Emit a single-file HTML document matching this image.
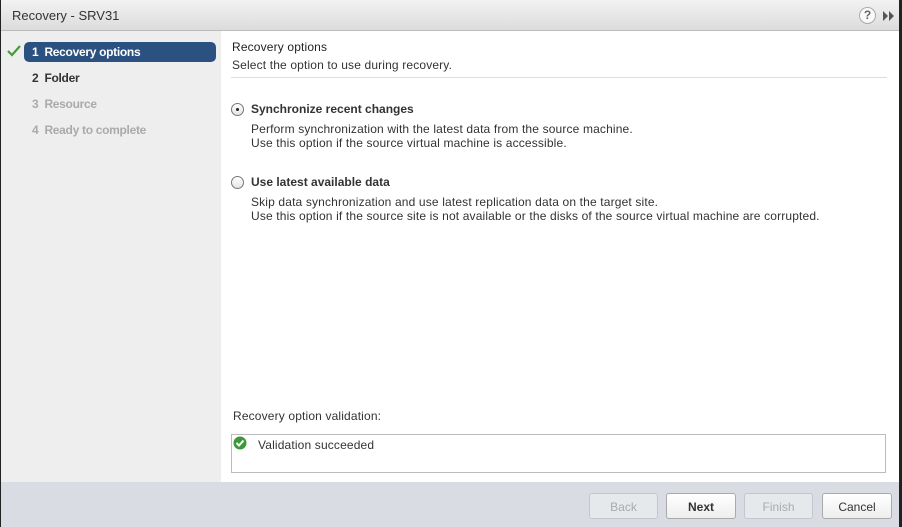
<!DOCTYPE html>
<html><head><meta charset="utf-8"><style>
*{margin:0;padding:0;box-sizing:border-box}
body{width:902px;height:527px;overflow:hidden;font-family:"Liberation Sans",Arial,sans-serif;font-size:12px;color:#333;background:#fff;position:relative;letter-spacing:0.15px}
.frame{position:absolute;left:0;top:0;width:902px;height:527px;border-left:1px solid #222;border-right:3px solid #222;}
.title{position:absolute;left:1px;top:0;width:898px;height:31px;background:linear-gradient(#f2f2f2,#dcdcdc);border-bottom:1px solid #bbb;font-size:13px;color:#333;padding:8px 0 0 11px;letter-spacing:0}
.left{position:absolute;left:1px;top:31px;width:220px;height:451px;background:#eee}
.right{position:absolute;left:221px;top:31px;width:678px;height:451px;background:#fff}
.footer{position:absolute;left:1px;top:482px;width:898px;height:45px;background:#d9dde3}
.step{position:absolute;left:24px;width:192px;height:20px;font-weight:bold;font-size:12px;padding:3px 0 0 8px;letter-spacing:-0.3px}
.sel{background:#2b5180;color:#fff;border-radius:5px}
.dim{color:#aaa}
.btn{position:absolute;top:493px;height:26px;border:1px solid #aaa;border-radius:3px;background:linear-gradient(#fff,#eee);text-align:center;font-size:12px;padding-top:6px;color:#333;letter-spacing:0}
.btn.dis{color:#aaa;border-color:#c4c8cc;background:#e6e9ec}
.radio{position:absolute;width:13px;height:13px;border:1px solid #777;border-radius:50%;background:linear-gradient(#fff,#e4e4e4)}
.t{position:absolute;white-space:nowrap}
</style></head><body>
<div class="frame"></div>
<div class="title">Recovery - SRV31</div>
<div style="position:absolute;left:859px;top:7px;width:17px;height:17px;border-radius:50%;border:1px solid #aaa;background:#fafafa;text-align:center;font-size:12px;font-weight:bold;color:#666;line-height:15px;letter-spacing:0">?</div>
<svg style="position:absolute;left:883px;top:11px" width="12" height="10"><path d="M0 0 L5 5 L0 10Z M6 0 L11 5 L6 10Z" fill="#555"/></svg>
<div class="left"></div>
<div class="right"></div>
<div class="footer"></div>
<svg style="position:absolute;left:7px;top:45px" width="14" height="12"><path d="M1 6 L5 10 L13 1" stroke="#4a9a3a" stroke-width="2.2" fill="none"/></svg>
<div class="step sel" style="top:42px">1&nbsp; Recovery options</div>
<div class="step" style="top:68px;color:#333">2&nbsp; Folder</div>
<div class="step dim" style="top:94px">3&nbsp; Resource</div>
<div class="step dim" style="top:120px">4&nbsp; Ready to complete</div>

<div class="t" style="left:232px;top:40px;color:#222">Recovery options</div>
<div class="t" style="left:232px;top:58px;color:#333">Select the option to use during recovery.</div>
<div style="position:absolute;left:231px;top:77px;width:656px;height:1px;background:#ddd"></div>

<div class="radio" style="left:231px;top:103px"><div style="position:absolute;left:4px;top:4px;width:3px;height:3px;border-radius:50%;background:#222"></div></div>
<div class="t" style="left:251px;top:102px;font-weight:bold;color:#333;letter-spacing:0">Synchronize recent changes</div>
<div class="t" style="left:251px;top:122px">Perform synchronization with the latest data from the source machine.</div>
<div class="t" style="left:251px;top:136px">Use this option if the source virtual machine is accessible.</div>

<div class="radio" style="left:231px;top:176px"></div>
<div class="t" style="left:251px;top:175px;font-weight:bold;color:#333;letter-spacing:0">Use latest available data</div>
<div class="t" style="left:251px;top:195px">Skip data synchronization and use latest replication data on the target site.</div>
<div class="t" style="left:251px;top:209px">Use this option if the source site is not available or the disks of the source virtual machine are corrupted.</div>

<div class="t" style="left:233px;top:409px">Recovery option validation:</div>
<div style="position:absolute;left:231px;top:434px;width:655px;height:39px;border:1px solid #bbb;background:#fff"></div>
<svg style="position:absolute;left:233px;top:436px" width="14" height="14"><circle cx="7" cy="7" r="6.5" fill="#3a9a3a"/><path d="M3.5 7 L6 9.5 L10.5 4.5" stroke="#fff" stroke-width="2" fill="none"/></svg>
<div class="t" style="left:258px;top:438px">Validation succeeded</div>

<div class="btn dis" style="left:589px;width:69px">Back</div>
<div class="btn" style="left:666px;width:70px;font-weight:bold">Next</div>
<div class="btn dis" style="left:744px;width:69px">Finish</div>
<div class="btn" style="left:822px;width:70px">Cancel</div>
</body></html>
